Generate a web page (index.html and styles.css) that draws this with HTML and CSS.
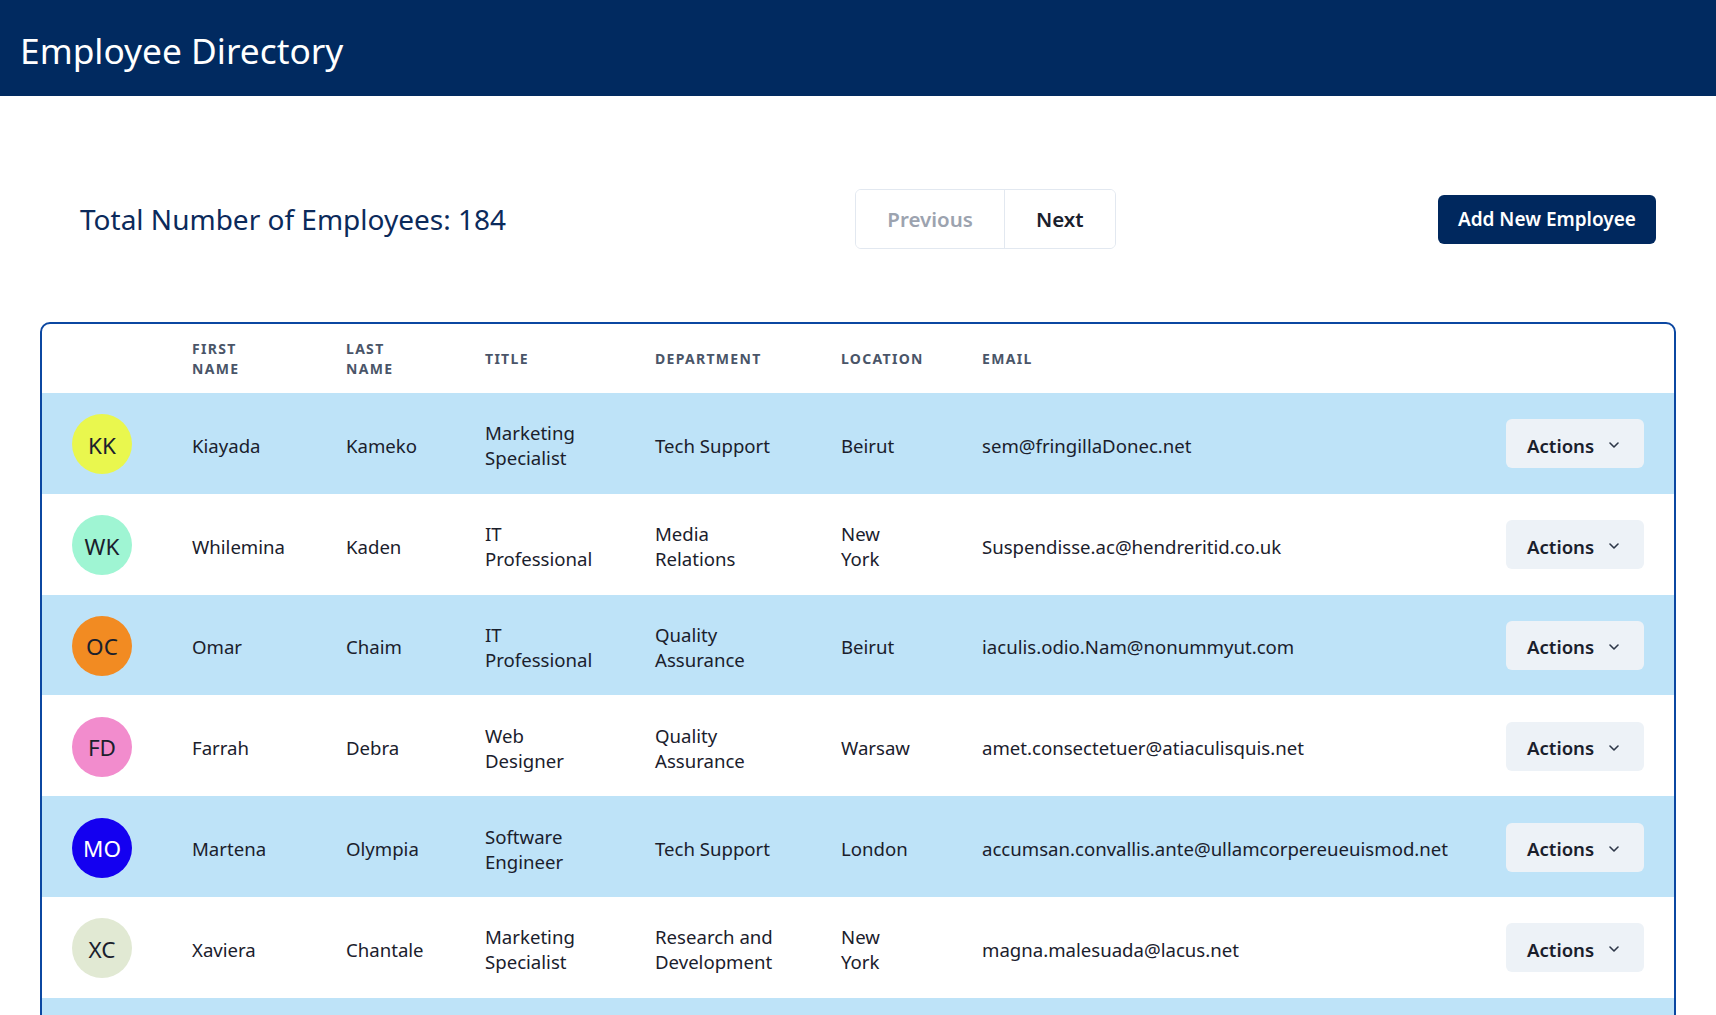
FILE: index.html
```html
<!DOCTYPE html>
<html lang="en">
<head>
<meta charset="utf-8">
<title>Employee Directory</title>
<link rel="stylesheet" href="styles.css">
</head>
<body>
<header class="topbar">
  <h1 class="topbar-title">Employee Directory</h1>
</header>
<main class="page">
  <section class="toolbar">
    <h2 class="total">Total Number of Employees: 184</h2>
    <nav class="pager">
      <button class="pager-btn is-disabled">Previous</button>
      <button class="pager-btn">Next</button>
    </nav>
    <button class="add-btn">Add New Employee</button>
  </section>

  <div class="card">
    <table class="emp-table">
      <colgroup>
        <col class="col-avatar">
        <col class="col-first">
        <col class="col-last">
        <col class="col-title">
        <col class="col-dept">
        <col class="col-loc">
        <col class="col-email">
        <col class="col-actions">
      </colgroup>
      <thead>
        <tr>
          <th></th>
          <th>First Name</th>
          <th>Last Name</th>
          <th>Title</th>
          <th>Department</th>
          <th>Location</th>
          <th>Email</th>
          <th></th>
        </tr>
      </thead>
      <tbody>
        <tr>
          <td class="cell-avatar"><span class="avatar av-kk">KK</span></td>
          <td>Kiayada</td>
          <td>Kameko</td>
          <td>Marketing Specialist</td>
          <td>Tech Support</td>
          <td>Beirut</td>
          <td>sem@fringillaDonec.net</td>
          <td class="cell-actions"><button class="actions-btn">Actions <svg class="chev" width="10" height="6" viewBox="0 0 10 6"><polyline points="1,1 5,5 9,1"/></svg></button></td>
        </tr>
        <tr>
          <td class="cell-avatar"><span class="avatar av-wk">WK</span></td>
          <td>Whilemina</td>
          <td>Kaden</td>
          <td>IT Professional</td>
          <td>Media Relations</td>
          <td>New York</td>
          <td>Suspendisse.ac@hendreritid.co.uk</td>
          <td class="cell-actions"><button class="actions-btn">Actions <svg class="chev" width="10" height="6" viewBox="0 0 10 6"><polyline points="1,1 5,5 9,1"/></svg></button></td>
        </tr>
        <tr>
          <td class="cell-avatar"><span class="avatar av-oc">OC</span></td>
          <td>Omar</td>
          <td>Chaim</td>
          <td>IT Professional</td>
          <td>Quality Assurance</td>
          <td>Beirut</td>
          <td>iaculis.odio.Nam@nonummyut.com</td>
          <td class="cell-actions"><button class="actions-btn">Actions <svg class="chev" width="10" height="6" viewBox="0 0 10 6"><polyline points="1,1 5,5 9,1"/></svg></button></td>
        </tr>
        <tr>
          <td class="cell-avatar"><span class="avatar av-fd">FD</span></td>
          <td>Farrah</td>
          <td>Debra</td>
          <td>Web Designer</td>
          <td>Quality Assurance</td>
          <td>Warsaw</td>
          <td>amet.consectetuer@atiaculisquis.net</td>
          <td class="cell-actions"><button class="actions-btn">Actions <svg class="chev" width="10" height="6" viewBox="0 0 10 6"><polyline points="1,1 5,5 9,1"/></svg></button></td>
        </tr>
        <tr>
          <td class="cell-avatar"><span class="avatar av-mo">MO</span></td>
          <td>Martena</td>
          <td>Olympia</td>
          <td>Software Engineer</td>
          <td>Tech Support</td>
          <td>London</td>
          <td>accumsan.convallis.ante@ullamcorpereueuismod.net</td>
          <td class="cell-actions"><button class="actions-btn">Actions <svg class="chev" width="10" height="6" viewBox="0 0 10 6"><polyline points="1,1 5,5 9,1"/></svg></button></td>
        </tr>
        <tr>
          <td class="cell-avatar"><span class="avatar av-xc">XC</span></td>
          <td>Xaviera</td>
          <td>Chantale</td>
          <td>Marketing Specialist</td>
          <td>Research and Development</td>
          <td>New York</td>
          <td>magna.malesuada@lacus.net</td>
          <td class="cell-actions"><button class="actions-btn">Actions <svg class="chev" width="10" height="6" viewBox="0 0 10 6"><polyline points="1,1 5,5 9,1"/></svg></button></td>
        </tr>
        <tr>
          <td class="cell-avatar"><span class="avatar av-jb">JB</span></td>
          <td>Jescie</td>
          <td>Bianca</td>
          <td>Web Designer</td>
          <td>Media Relations</td>
          <td>Paris</td>
          <td>nunc.sed@pedeultrices.org</td>
          <td class="cell-actions"><button class="actions-btn">Actions <svg class="chev" width="10" height="6" viewBox="0 0 10 6"><polyline points="1,1 5,5 9,1"/></svg></button></td>
        </tr>
      </tbody>
    </table>
  </div>
</main>
</body>
</html>
```

FILE: styles.css
```css
* {
  box-sizing: border-box;
}

html, body {
  margin: 0;
  padding: 0;
  background: #ffffff;
}

body {
  font-family: "Noto Sans", "Open Sans", sans-serif;
  color: #1a202c;
}

button {
  font-family: inherit;
  cursor: pointer;
}

/* Top bar */
.topbar {
  height: 96px;
  background: #012a60;
  display: flex;
  align-items: center;
  padding: 0 0 0 20px;
}

.topbar-title {
  margin: 0;
  font-size: 35.3px;
  font-weight: 400;
  color: #ffffff;
  line-height: 1;
  position: relative;
  top: 3px;
}

/* Toolbar */
.toolbar {
  display: flex;
  align-items: center;
  justify-content: space-between;
  margin: 93px 60px 0 80px;
}

.total {
  margin: 0;
  font-size: 28px;
  font-weight: 400;
  color: #0b2a5b;
  line-height: 1.2;
  position: relative;
  top: 1px;
}

.pager {
  display: flex;
  height: 60px;
  border: 1px solid #e2e8f0;
  border-radius: 6px;
  overflow: hidden;
  margin-left: 27px;
}

.pager-btn {
  border: none;
  background: #ffffff;
  padding: 0 31px;
  font-size: 20.5px;
  font-weight: 600;
  color: #1a202c;
}

.pager-btn + .pager-btn {
  border-left: 1px solid #e2e8f0;
}

.pager-btn.is-disabled {
  color: #9ca3af;
}

.add-btn {
  height: 49px;
  padding: 0 20px;
  border: none;
  border-radius: 6px;
  background: #00285e;
  color: #ffffff;
  font-size: 19px;
  font-weight: 600;
}

/* Card & table */
.card {
  margin: 73px 40px 0 40px;
  border: 2px solid #0b47a1;
  border-radius: 10px;
  overflow: hidden;
}

.emp-table {
  width: 100%;
  border-collapse: collapse;
  table-layout: fixed;
}

.col-avatar { width: 150px; }
.col-first { width: 154px; }
.col-last { width: 139px; }
.col-title { width: 170px; }
.col-dept { width: 186px; }
.col-loc { width: 141px; }
.col-actions { width: 168px; }

.emp-table th {
  height: 69px;
  padding: 0 60px 0 0;
  text-align: left;
  vertical-align: middle;
  font-size: 14px;
  font-weight: 700;
  line-height: 20px;
  letter-spacing: 1.3px;
  text-transform: uppercase;
  color: #4a5568;
}

.emp-table td {
  height: 100.8px;
  padding: 4px 60px 0 0;
  vertical-align: middle;
  font-size: 18.6px;
  line-height: 25px;
  color: #1a202c;
}

.emp-table tbody tr:nth-child(odd) {
  background: #bee3f8;
}

.emp-table td.cell-avatar {
  padding: 2px 0 0 30px;
}

.emp-table td.cell-actions {
  padding: 1px 30px 0 0;
  text-align: right;
}

.avatar {
  width: 60px;
  height: 60px;
  border-radius: 50%;
  display: flex;
  align-items: center;
  justify-content: center;
  padding-top: 2px;
  font-size: 22.5px;
  color: #1a202c;
}

.av-kk { background: #e9f74e; }
.av-wk { background: #9ff5d3; }
.av-oc { background: #f28b22; }
.av-fd { background: #f28ccd; }
.av-mo { background: #1400f0; color: #ffffff; }
.av-xc { background: #e1e9d3; }
.av-jb { background: #c4b5fd; }

.actions-btn {
  display: inline-flex;
  align-items: center;
  gap: 15px;
  height: 49px;
  padding: 3px 25px 0 21px;
  border: none;
  border-radius: 6px;
  background: #edf2f7;
  color: #1a202c;
  font-size: 18.6px;
  font-weight: 600;
}

.chev {
  fill: none;
  stroke: #2d3748;
  stroke-width: 1.6;
  stroke-linecap: round;
  stroke-linejoin: round;
}
```
